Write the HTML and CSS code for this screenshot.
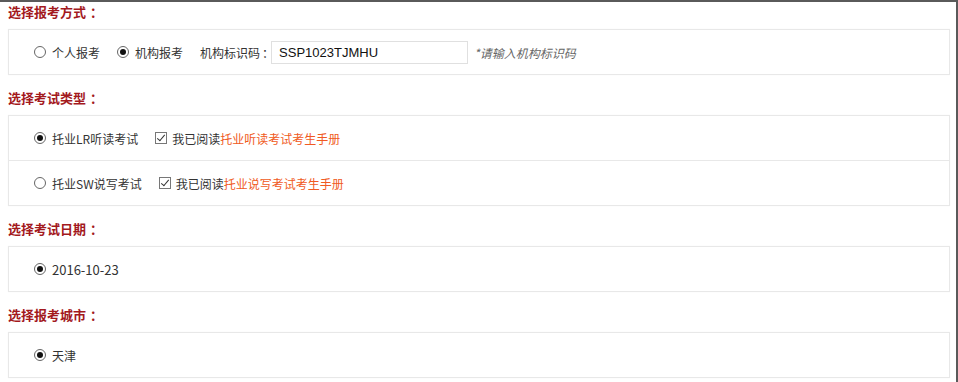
FILE: index.html
```html
<!DOCTYPE html>
<html lang="zh-CN">

<head>
    <meta charset="UTF-8">
    <meta name="viewport" content="width=device-width, initial-scale=1.0">
    <title>选择报考</title>
    <link rel="stylesheet" href="styles.css">
</head>

<body>
    <div class="page">
        <h3 class="section-title">选择报考方式<span class="colon">：</span></h3>
        <div class="box">
            <div class="row">
                <label class="opt"><input type="radio" name="way"> 个人报考</label>
                <label class="opt"><input type="radio" name="way" checked> 机构报考</label>
                <span class="label">机构标识码<span class="colon">：</span></span>
                <input class="code-input" type="text" value="SSP1023TJMHU">
                <span class="hint">*请输入机构标识码</span>
            </div>
        </div>

        <h3 class="section-title">选择考试类型<span class="colon">：</span></h3>
        <div class="box">
            <div class="row">
                <label class="opt"><input type="radio" name="type" checked> 托业LR听读考试</label>
                <label class="agree"><input type="checkbox" checked> <span>我已阅读<a href="#">托业听读考试考生手册</a></span></label>
            </div>
            <div class="row">
                <label class="opt"><input type="radio" name="type"> 托业SW说写考试</label>
                <label class="agree"><input type="checkbox" checked> <span>我已阅读<a href="#">托业说写考试考生手册</a></span></label>
            </div>
        </div>

        <h3 class="section-title">选择考试日期<span class="colon">：</span></h3>
        <div class="box">
            <div class="row">
                <label class="opt date"><input type="radio" name="date" checked> 2016-10-23</label>
            </div>
        </div>

        <h3 class="section-title">选择报考城市<span class="colon">：</span></h3>
        <div class="box">
            <div class="row">
                <label class="opt"><input type="radio" name="city" checked> 天津</label>
            </div>
        </div>
    </div>
</body>

</html>
```

FILE: styles.css
```css
body {
    margin: 0;
    height: 382px;
    box-sizing: border-box;
    border-top: 2px solid #5a5a5a;
    border-right: 2px solid #5a5a5a;
    background-color: #fff;
    font-family: "Noto Sans CJK SC", "Noto Sans", sans-serif;
    font-size: 12px;
    color: #333;
    overflow: hidden;
}

.page {
    padding: 0 6px 0 8px;
}

.section-title {
    margin: 0 0 7px;
    line-height: 20px;
    font-size: 13px;
    font-weight: bold;
    color: #a3191d;
}

/* full-width colon sits centred in the reference font */
.colon {
    padding-left: 4px;
}

.box {
    border: 1px solid #e8e8e8;
    box-shadow: 0 0 1px rgba(0, 0, 0, 0.06);
    margin-bottom: 13px;
}

.row {
    display: flex;
    align-items: center;
    height: 44px;
    padding-left: 25px;
}

.row + .row {
    border-top: 1px solid #e8e8e8;
}

.opt {
    display: flex;
    align-items: center;
    gap: 6px;
    margin-right: 17px;
    white-space: nowrap;
}

.opt input {
    appearance: none;
    margin: 0;
    width: 12px;
    height: 12px;
    border: 1px solid #666;
    border-radius: 50%;
    box-sizing: border-box;
    display: grid;
    place-items: center;
    background: #fff;
}

.opt input:checked::after {
    content: "";
    width: 6px;
    height: 6px;
    border-radius: 50%;
    background: #111;
}

.date {
    font-size: 13px;
}

.label {
    white-space: nowrap;
}

.label .colon {
    padding-left: 2px;
}

.code-input {
    width: 197px;
    height: 23px;
    box-sizing: border-box;
    border: 1px solid #e0e0e0;
    padding: 0 7px;
    font-family: "Liberation Sans", Arial, sans-serif;
    font-size: 13px;
    color: #111;
    margin: 0 6px 0 -3px;
}

.hint {
    font-style: italic;
    color: #666;
    white-space: nowrap;
}

.agree {
    display: flex;
    align-items: center;
    gap: 5px;
    white-space: nowrap;
}

.agree input {
    appearance: none;
    margin: 0;
    width: 12px;
    height: 12px;
    border: 1px solid #777;
    box-sizing: border-box;
    position: relative;
    background: #fff;
}

.agree input:checked::after {
    content: "";
    position: absolute;
    left: 3px;
    top: 0px;
    width: 3px;
    height: 7px;
    border-right: 1px solid #333;
    border-bottom: 1px solid #333;
    transform: rotate(40deg);
}

.agree a {
    color: #f05a22;
    text-decoration: none;
}
```
